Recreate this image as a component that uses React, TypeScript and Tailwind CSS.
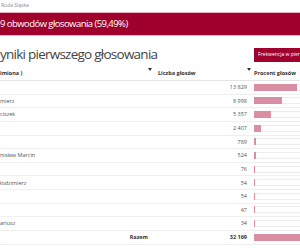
import React from "react";

type Row = { name: string; votes: string; pct: number };

const rows: Row[] = [
  { name: "", votes: "13 829", pct: 42.99 },
  { name: "mierz", votes: "8 998", pct: 27.97 },
  { name: "ciszek", votes: "5 357", pct: 16.65 },
  { name: "", votes: "2 407", pct: 7.48 },
  { name: "", votes: "789", pct: 2.45 },
  { name: "nisław Marcin", votes: "524", pct: 1.63 },
  { name: "", votes: "76", pct: 0.24 },
  { name: "łodzimierz", votes: "54", pct: 0.17 },
  { name: "", votes: "54", pct: 0.17 },
  { name: "", votes: "47", pct: 0.15 },
  { name: "ariusz", votes: "34", pct: 0.11 },
];

function Arrow() {
  return (
    <svg width="4" height="3" viewBox="0 0 4 3" className="absolute right-[0px] top-[1px]">
      <path d="M0 0 L4 0 L2 3 Z" fill="#333" />
    </svg>
  );
}

export default function App() {
  return (
    <div
      className="w-[300px] h-[250px] overflow-hidden bg-white text-[#444]"
      style={{ fontFamily: '"Open Sans", sans-serif' }}
    >
      <div className="h-[12px] pl-[1px] text-[5px] leading-[11px] text-[#888]">Ruda Śląska</div>
      <div className="h-[24px] bg-[#a0002c] border-y border-[#e8b3c1] flex items-center text-white text-[9.5px] tracking-[-0.55px] whitespace-nowrap">
        9 obwodów głosowania (59,49%)
      </div>
      <div className="h-[31px] flex items-center justify-between pt-[6px]">
        <h2 className="text-[13.5px] tracking-[-0.75px] text-[#444] whitespace-nowrap leading-none">yniki pierwszego głosowania</h2>
        <div className="w-[46px] h-[14px] bg-[#a0002c] text-white text-[5px] flex items-center pl-[4px] whitespace-nowrap overflow-hidden">
          Frekwencja w pierwszym głosowaniu
        </div>
      </div>
      <div className="w-[360px]">
        <div className="flex h-[14px] border-b border-[#e4e4e4] text-[5.5px] font-bold text-[#333] items-center">
          <div className="relative w-[152px] h-full flex items-center">
            <span>imiona )</span>
            <Arrow />
          </div>
          <div className="relative w-[99px] h-full flex items-center pl-[6px]">
            <span>Liczba głosów</span>
            <Arrow />
          </div>
          <div className="flex-1 pl-[3px]">Procent głosów</div>
        </div>
        {rows.map((r, i) => (
          <div key={i} className="flex h-[13.64px] border-b border-[#efefef] text-[5.5px] text-[#555] items-center">
            <div className="w-[152px] whitespace-nowrap">{r.name}</div>
            <div className="w-[99px] text-right pr-[4px]">{r.votes}</div>
            <div className="flex-1 pl-[3px]">
              <div className="w-[100px] h-[7px] border border-[#ececec] relative">
                <div className="absolute left-[-1px] top-[-1px] h-[7px] bg-[#da8ea4]" style={{ width: `${r.pct}px` }} />
              </div>
            </div>
          </div>
        ))}
        <div className="flex h-[13.64px] border-b border-[#efefef] text-[5.5px] items-center">
          <div className="w-[152px] text-right pr-[4px] font-bold text-[#333]">Razem</div>
          <div className="w-[99px] text-right pr-[4px] font-bold text-[#333]">32 169</div>
          <div className="flex-1 pl-[3px]">
            <div className="w-[100px] h-[7px] bg-[#da8ea4]" />
          </div>
        </div>
      </div>
    </div>
  );
}
